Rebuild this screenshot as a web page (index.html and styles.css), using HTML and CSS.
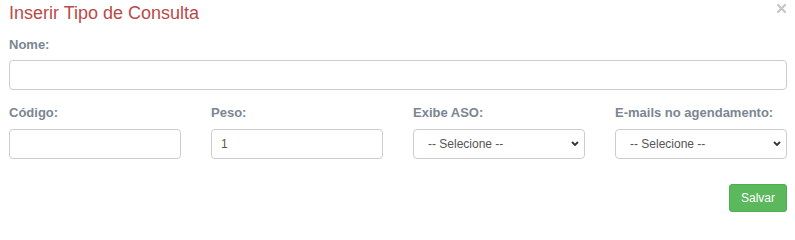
FILE: index.html
```html
<!DOCTYPE html>
<html lang="pt-BR">
<head>
<meta charset="utf-8">
<title>Inserir Tipo de Consulta</title>
<link rel="stylesheet" href="styles.css">
</head>
<body>
<div class="modal">
  <div class="modal-header">
    <h4 class="modal-title">Inserir Tipo de Consulta</h4>
    <button class="close" type="button" aria-label="Fechar">
      <svg width="9" height="9" viewBox="0 0 9 9"><path d="M1 1 L8 8 M8 1 L1 8" stroke="#c6c6c6" stroke-width="2.2" stroke-linecap="square"/></svg>
    </button>
  </div>
  <div class="field field-nome">
    <label class="label label-top">Nome:</label>
    <input class="control" type="text">
  </div>
  <div class="row">
    <div class="field">
      <label class="label">Código:</label>
      <input class="control" type="text">
    </div>
    <div class="field">
      <label class="label">Peso:</label>
      <input class="control" type="text" value="1">
    </div>
    <div class="field">
      <label class="label">Exibe ASO:</label>
      <div class="select-wrap">
        <select class="control select"><option>-- Selecione --</option></select>
        <svg class="chevron" width="8" height="5" viewBox="0 0 8 5"><path d="M1 1 L4 4 L7 1" fill="none" stroke="#333" stroke-width="1.8"/></svg>
      </div>
    </div>
    <div class="field">
      <label class="label">E-mails no agendamento:</label>
      <div class="select-wrap">
        <select class="control select"><option>-- Selecione --</option></select>
        <svg class="chevron" width="8" height="5" viewBox="0 0 8 5"><path d="M1 1 L4 4 L7 1" fill="none" stroke="#333" stroke-width="1.8"/></svg>
      </div>
    </div>
  </div>
  <div class="footer">
    <button class="btn-success" type="button">Salvar</button>
  </div>
</div>
</body>
</html>
```
FILE: styles.css
```css
* { box-sizing: border-box; }
html, body { margin: 0; padding: 0; background: #fff; }
body {
  font-family: "Liberation Sans", Arial, sans-serif;
  font-size: 12px;
  color: #333;
}
.modal {
  width: 778px;
  margin-left: 9px;
}
.modal-header {
  display: flex;
  justify-content: space-between;
  align-items: flex-start;
}
.modal-title {
  margin: 3px 0 0 0;
  font-size: 18px;
  line-height: 20px;
  font-weight: normal;
  color: #b94a48;
}
.close {
  margin: 4px 1px 0 0;
  padding: 0;
  border: 0;
  background: none;
  width: 9px;
  height: 9px;
  display: flex;
}
.field { display: flex; flex-direction: column; }
.field-nome { margin-top: 14px; }
.label {
  display: block;
  font-size: 13px;
  line-height: 16px;
  font-weight: bold;
  color: #7b8692;
  margin-bottom: 8px;
}
.label-top { margin-bottom: 7px; }
.control {
  width: 100%;
  height: 30px;
  border: 1px solid #ccc;
  border-radius: 4px;
  padding: 0 9px;
  font-family: "Liberation Sans", Arial, sans-serif;
  font-size: 12px;
  color: #555;
  background: #fff;
  outline: none;
}
.row {
  display: grid;
  grid-template-columns: repeat(4, 1fr);
  column-gap: 30px;
  margin-top: 15px;
}
.select-wrap { position: relative; }
.select {
  -webkit-appearance: none;
  appearance: none;
  padding-left: 14px;
  color: #555;
}
.chevron {
  position: absolute;
  right: 6px;
  top: 12px;
  pointer-events: none;
}
.footer {
  display: flex;
  justify-content: flex-end;
  margin-top: 25px;
}
.btn-success {
  height: 28px;
  padding: 0 11px;
  border: 1px solid #4cae4c;
  border-radius: 3px;
  background: #5cb85c;
  color: #fff;
  font-family: "Liberation Sans", Arial, sans-serif;
  font-size: 12px;
}
```
